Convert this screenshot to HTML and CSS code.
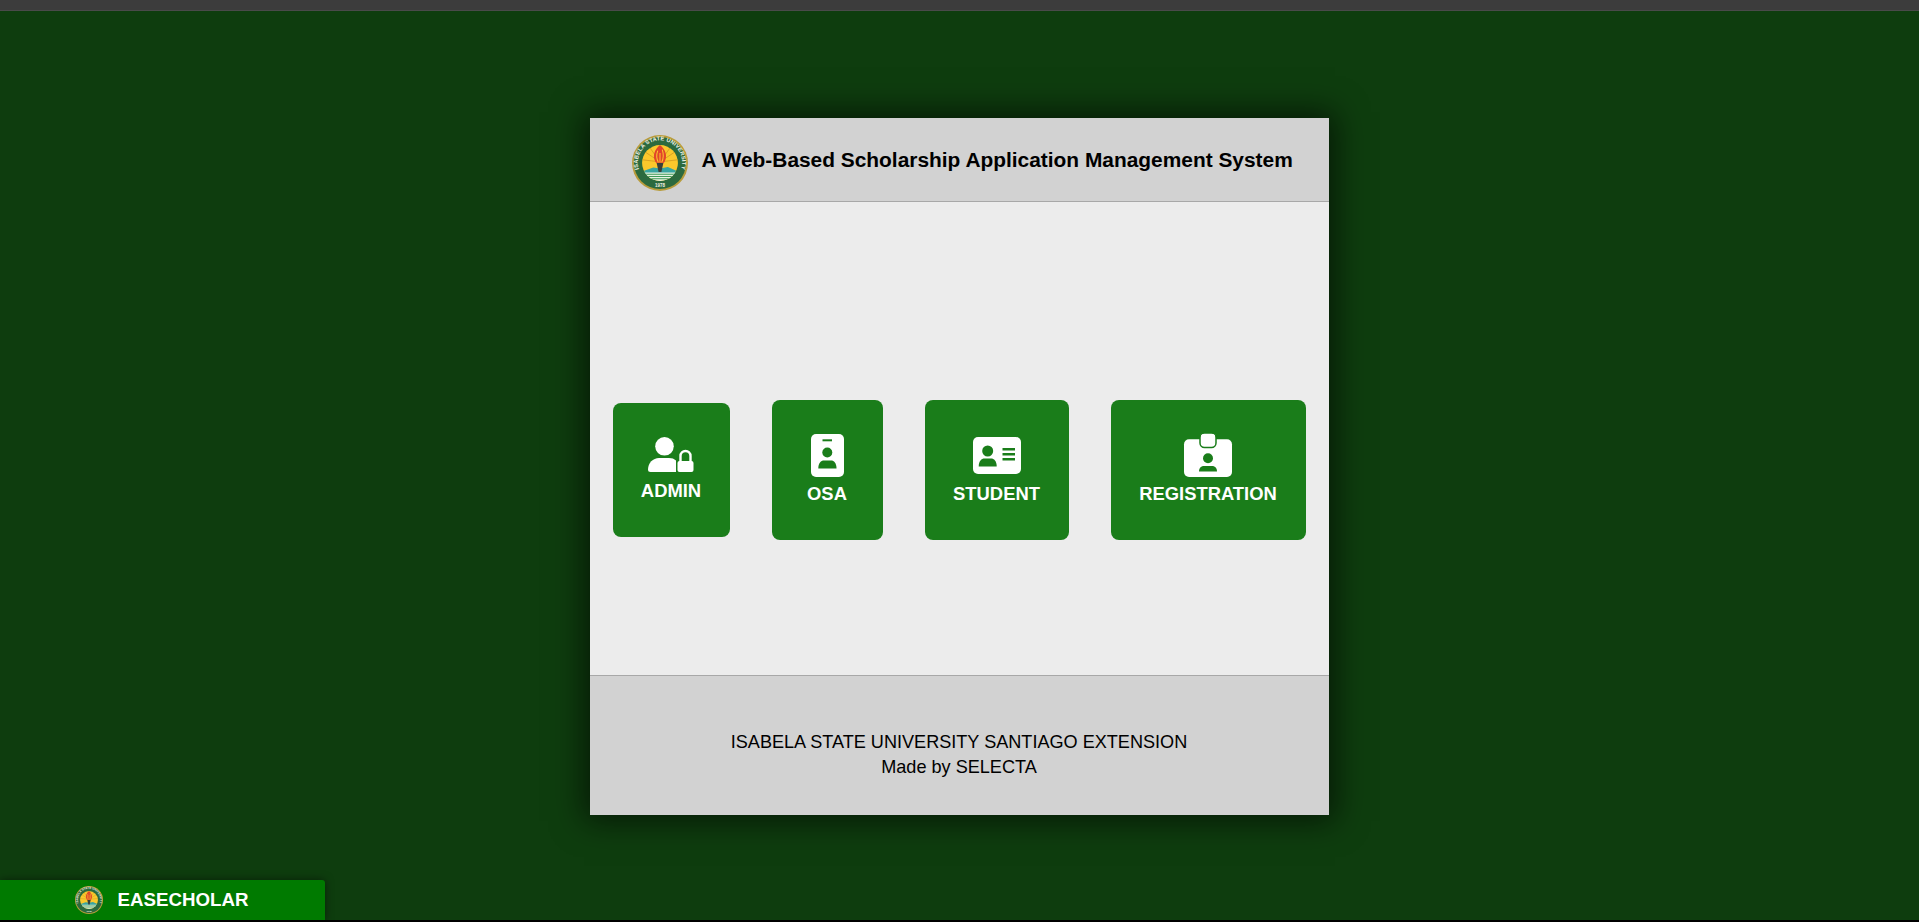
FILE: index.html
```html
<!DOCTYPE html>
<html lang="en">
	<head>
		<meta charset="UTF-8">
		<meta name="viewport" content="width=device-width, initial-scale=1.0">
		<title>EASECHOLAR</title>
		<link rel="stylesheet" href="styles.css">
	</head>
	<body>
		<svg class="defs" width="0" height="0" aria-hidden="true">
			<defs>
				<path id="arc" d="M12 60 A39.500 39.500 0 1 1 88 60"/>
				<clipPath id="sunclip"><circle cx="50" cy="50" r="32"/></clipPath>
				<symbol id="seal" viewBox="0 0 100 100">
					<circle cx="50" cy="50" r="50" fill="#b89c3c"/>
					<circle cx="50" cy="50" r="46.500" fill="#2c6a3e"/>
					<text class="seal-text"><textPath href="#arc" startOffset="50%" text-anchor="middle">ISABELA STATE UNIVERSITY</textPath></text>
					<text class="seal-year" x="50" y="92" text-anchor="middle">1978</text>
					<g clip-path="url(#sunclip)">
						<rect x="15" y="15" width="70" height="70" fill="#fbc82c"/>
						<path d="M50 48 L20 28 M50 48 L30 20 M50 48 L70 20 M50 48 L80 28 M50 48 L16 44 M50 48 L84 44" stroke="#c98f1e" stroke-width="1.200"/>
						<path d="M16 66 L38 58 L50 60 L64 57 L84 66 V72 H16 Z" fill="#38a5a0"/>
						<rect x="16" y="67" width="68" height="18" fill="#e4f2e2"/>
						<path d="M18 70 H82 M20 74 H80 M24 78 H76" stroke="#3f9a57" stroke-width="1.800"/>
					</g>
					<path d="M50 18 C40 26 36 38 42 48 C44 52 56 52 58 48 C64 38 60 26 50 18 Z" fill="#e2452a"/>
					<path d="M46 28 C43 36 44 43 47 49 M54 26 C57 35 56 43 53 49 M50 32 V49" fill="none" stroke="#fbc82c" stroke-width="1.800"/>
					<path d="M44 50 H56 L52.500 66 H47.500 Z" fill="#3a3f3a"/>
				</symbol>
			</defs>
		</svg>

		<div class="topbar"></div>

		<main class="stage">
			<section class="panel">
				<header class="panel-head">
					<svg class="logo"><use href="#seal"/></svg>
					<h1>A Web-Based Scholarship Application Management System</h1>
				</header>
				<nav class="panel-body">
					<a class="tile tile-admin" href="#">
						<svg class="icon-admin" viewBox="0 0 46 35">
							<circle cx="16.500" cy="9.300" r="9.300" fill="#fff"/>
							<path d="M0 32.500 C0 26 5 21 11 21 H21 C24 21 26 21.800 28 23.500 V35 H2.500 A2.500 2.500 0 0 1 0 32.500 Z" fill="#fff"/>
							<rect x="29.500" y="24" width="16" height="11" rx="2" fill="#fff"/>
							<path d="M32.500 25 V19 A5 5 0 0 1 42.500 19 V25" fill="none" stroke="#fff" stroke-width="2.400"/>
						</svg>
						ADMIN
					</a>
					<a class="tile tile-osa" href="#">
						<span class="icon-box">
							<svg width="33" height="43" viewBox="0 0 33 43">
								<rect width="33" height="43" rx="5" fill="#fff"/>
								<rect x="11.500" y="5.300" width="9.500" height="2" fill="#1a7d1a"/>
								<circle cx="16.300" cy="18.500" r="5" fill="#1a7d1a"/>
								<path d="M7.300 34.500 C7.300 29 10 26.500 13 26.500 H20 C23 26.500 25.500 29 25.500 34.500 Z" fill="#1a7d1a"/>
							</svg>
						</span>
						OSA
					</a>
					<a class="tile tile-student" href="#">
						<span class="icon-box">
							<svg width="48" height="37" viewBox="0 0 48 37">
								<rect width="48" height="37" rx="5" fill="#fff"/>
								<circle cx="14.700" cy="14" r="5.500" fill="#1a7d1a"/>
								<path d="M5.700 29.500 C5.700 24 8.500 21.500 11.500 21.500 H18 C21 21.500 23.700 24 23.700 29.500 Z" fill="#1a7d1a"/>
								<path d="M29.500 12.300 H42 M29.500 17.300 H42 M29.500 22.300 H42" stroke="#1a7d1a" stroke-width="2.400"/>
							</svg>
						</span>
						STUDENT
					</a>
					<a class="tile tile-reg" href="#">
						<span class="icon-box">
							<svg width="48" height="43" viewBox="0 0 48 43">
								<rect y="5.300" width="48" height="37.700" rx="5" fill="#fff"/>
								<rect x="16" y="-1" width="16" height="14.500" rx="4.500" fill="#fff" stroke="#1a7d1a" stroke-width="1.500"/>
								<rect x="17" y="0" width="14" height="5.300" rx="3" fill="#fff"/>
								<circle cx="24" cy="24.300" r="5" fill="#1a7d1a"/>
								<path d="M15 37.500 C15 33.500 17.500 32 20 32 H28 C30.500 32 33 33.500 33 37.500 Z" fill="#1a7d1a"/>
							</svg>
						</span>
						REGISTRATION
					</a>
				</nav>
				<footer class="panel-foot">
					<p>ISABELA STATE UNIVERSITY SANTIAGO EXTENSION</p>
					<p>Made by SELECTA</p>
				</footer>
			</section>
		</main>

		<div class="dock">
			<svg class="dock-logo"><use href="#seal"/></svg>
			<span>EASECHOLAR</span>
		</div>
	</body>
</html>
```

FILE: styles.css
```css
html, body {
	height: 100%;
}

body {
	margin: 0;
	display: flex;
	flex-direction: column;
	overflow: hidden;
	background-color: #0e3d0e;
	font-family: "Liberation Sans", Arial, sans-serif;
	color: #000;
}

.defs {
	position: absolute;
}

.seal-text {
	font-family: "Liberation Sans", Arial, sans-serif;
	font-size: 10px;
	font-weight: bold;
	letter-spacing: 0.3px;
	fill: #f2f2e6;
}

.seal-year {
	font-family: "Liberation Sans", Arial, sans-serif;
	font-size: 8px;
	font-weight: bold;
	fill: #f2f2e6;
}

.topbar {
	height: 10px;
	flex: none;
	background-color: #3c3c3c;
	border-bottom: 1px solid #4a4a4a;
}

.stage {
	flex: 1;
	display: flex;
	justify-content: center;
	align-items: flex-start;
	padding-top: 107px;
	padding-right: 1px;
}

.panel {
	width: 739px;
	height: 697px;
	display: flex;
	flex-direction: column;
	box-shadow: 0 0 30px 6px rgba(0, 0, 0, 0.6);
}

.panel-head {
	height: 83px;
	flex: none;
	display: flex;
	align-items: center;
	gap: 14px;
	padding-left: 42px;
	background-color: #d2d2d2;
	border-bottom: 1px solid #a8a8a8;
}

.logo {
	width: 56px;
	height: 56px;
	flex: none;
	margin-top: 6px;
}

h1 {
	margin: 0;
	font-size: 20.900px;
	font-weight: bold;
	white-space: nowrap;
}

.panel-body {
	flex: 1;
	display: flex;
	align-items: center;
	gap: 42px;
	padding: 62px 23px 0;
	background-color: #ececec;
	box-sizing: border-box;
}

.tile {
	height: 140px;
	flex: none;
	box-sizing: border-box;
	display: flex;
	flex-direction: column;
	align-items: center;
	padding-top: 34px;
	background-color: #1a7d1a;
	border-radius: 8px;
	color: #fff;
	font-size: 18.400px;
	font-weight: bold;
	line-height: 21px;
	text-decoration: none;
}

.tile-admin {
	width: 117px;
	height: 134px;
}

.tile-osa {
	width: 111px;
}

.tile-student {
	width: 144px;
}

.tile-reg {
	width: 195px;
}

.icon-admin {
	width: 46px;
	height: 35px;
	margin-bottom: 8px;
}

.icon-box {
	height: 43px;
	margin-bottom: 6px;
	display: flex;
	align-items: center;
}

.icon-box svg {
	overflow: visible;
}

.panel-foot {
	height: 140px;
	flex: none;
	box-sizing: border-box;
	padding-top: 54px;
	background-color: #d2d2d2;
	border-top: 1px solid #a8a8a8;
	text-align: center;
	font-size: 18.100px;
	line-height: 25px;
}

.panel-foot p {
	margin: 0;
}

.dock {
	width: 325px;
	height: 40px;
	flex: none;
	display: flex;
	align-items: center;
	justify-content: center;
	gap: 15px;
	padding-right: 2px;
	box-sizing: border-box;
	background-color: #007a00;
	border-top-right-radius: 3px;
	box-shadow: 0 0 8px rgba(0, 0, 0, 0.5);
	color: #fff;
	font-size: 18.700px;
	font-weight: bold;
}

.dock-logo {
	width: 28px;
	height: 28px;
}

body::after {
	content: "";
	height: 2px;
	flex: none;
	background-color: #000;
}
```
